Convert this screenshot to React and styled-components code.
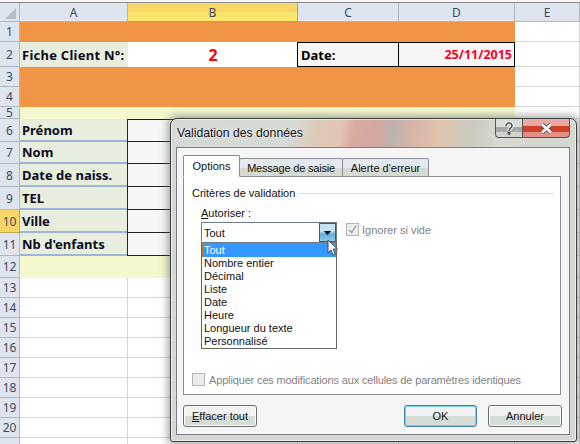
import React from 'react';
import styled, { createGlobalStyle } from 'styled-components';

const GlobalStyle = createGlobalStyle`
  html, body {
    margin: 0;
    padding: 0;
    background: #ffffff;
    overflow: hidden;
  }
`;

const Screen = styled.div`
  position: relative;
  width: 580px;
  height: 444px;
  overflow: hidden;
  background: #ffffff;
  font-family: "Noto Sans", "Liberation Sans", sans-serif;
`;

const Sheet = styled.div`
  display: grid;
  grid-template-columns: 20px 108px 170px 101px 116px 65px;
  grid-template-rows: 3px 19px 20px 25px 20px 20px 12px 23px 22px 23px 23px 23px 23px 22px repeat(9, 20px);
`;

const TopStrip = styled.div`
  grid-column: 1 / -1;
  background: linear-gradient(#f4f6f8 0 2px, #8d8d8d 2px);
`;

const Corner = styled.div`
  background: #dfe5ee;
  border-right: 1px solid #b0b7c0;
  border-bottom: 1px solid #b0b7c0;
  position: relative;
  &::after {
    content: "";
    position: absolute;
    right: 3px;
    bottom: 2px;
    border-left: 11px solid transparent;
    border-bottom: 11px solid #b8bdc3;
  }
`;

const ColHead = styled.div`
  display: flex;
  align-items: center;
  justify-content: center;
  font-size: 12px;
  color: #3d4a5c;
  background: ${(p) => (p.$active ? 'linear-gradient(#f9d669 0 9px, #f8e56a 9px)' : '#dfe5ee')};
  border-right: 1px solid ${(p) => (p.$active ? '#c2a04c' : '#b0b7c0')};
  border-bottom: 1px solid ${(p) => (p.$active ? '#c2a04c' : '#b0b7c0')};
`;

const RowHead = styled.div`
  display: flex;
  align-items: center;
  justify-content: center;
  font-size: 12px;
  color: #3d4a5c;
  background: ${(p) => (p.$active ? '#f8d666' : '#dfe5ee')};
  border-right: 1px solid ${(p) => (p.$active ? '#c2a04c' : '#b0b7c0')};
  border-bottom: 1px solid ${(p) => (p.$active ? '#c2a04c' : '#b0b7c0')};
`;

const Cell = styled.div`
  display: flex;
  align-items: center;
  min-width: 0;
  white-space: nowrap;
  overflow: hidden;
  box-sizing: border-box;
  grid-column: span ${(p) => p.$span || 1};
  background: ${(p) => p.$bg || '#ffffff'};
  border-right: 1px solid ${(p) => p.$line || '#d4d4d4'};
  border-bottom: 1px solid ${(p) => p.$line || '#d4d4d4'};
`;

const Fill = styled(Cell)`
  border: none;
`;

const LabelCell = styled(Cell)`
  padding-left: 2px;
  font-size: 13px;
  font-weight: 700;
  letter-spacing: ${(p) => p.$track || 0}px;
  color: #0a0a1e;
  background: #e7eedd;
  border-right: none;
  border-bottom: ${(p) => (p.$rule ? '2px solid #9db6d6' : 'none')};
`;

const NumberCell = styled(Cell)`
  justify-content: center;
  font-size: 16px;
  font-weight: 700;
  color: #ff0000;
  border: none;
`;

const BoxCell = styled(Cell)`
  background: #f6f6f6;
  font-size: ${(p) => (p.$end ? '12.5px' : '13px')};
  font-weight: 700;
  border-top: 1px solid #000000;
  border-right: 1px solid #000000;
  border-bottom: 1px solid #000000;
  border-left: ${(p) => (p.$first ? '1px solid #000000' : 'none')};
  margin-left: ${(p) => (p.$first ? '-1px' : '0')};
  color: ${(p) => p.$color || '#000000'};
  padding: 0 2px 0 3px;
  justify-content: ${(p) => (p.$end ? 'flex-end' : 'flex-start')};
`;

const InputCell = styled(Cell)`
  background: #f6f6f6;
  margin-left: ${(p) => (p.$first ? '-1px' : '0')};
  border-left: ${(p) => (p.$first ? '1px solid #222222' : 'none')};
  border-right: 1px solid #222222;
  border-bottom: 1px solid #222222;
  border-top: ${(p) => (p.$top ? '1px solid #222222' : 'none')};
`;

const Dialog = styled.div`
  position: absolute;
  left: 170px;
  top: 118px;
  width: 407px;
  height: 324px;
  box-sizing: border-box;
  display: flex;
  flex-direction: column;
  padding: 0 6px 6px 5px;
  border: 1px solid #3c4043;
  border-radius: 7px 7px 3px 3px;
  background:
    linear-gradient(100deg, #d5d9d4 0 30%, #dccab8 36%, #e2c5b2 42%, #d8ab9f 45%, #d2a7a2 51%, #bdb3ae 55%, #d6b3a6 59%, #e0c2ad 66%, #c9cac0 74%, #d5d9d0 80%, #d3d8d0 100%) top / 100% 29px no-repeat,
    #d3d9d2;
  box-shadow: 0 0 7px 3px rgba(95, 100, 95, 0.5), inset 0 0 0 1px rgba(255, 255, 255, 0.55);
  font-family: "Liberation Sans", "Noto Sans", sans-serif;
  font-size: 11px;
  color: #111111;
`;

const TitleBar = styled.div`
  height: 28px;
  flex: none;
  display: flex;
  align-items: center;
  justify-content: space-between;
  font-size: 12.2px;
  color: #1a1a1a;
`;

const TitleText = styled.span`
  padding-left: 1px;
  text-shadow: 0 0 6px rgba(255, 255, 255, 0.9);
`;

const Caption = styled.div`
  display: flex;
  align-self: flex-start;
`;

const CaptionButton = styled.div`
  width: ${(p) => (p.$close ? '47px' : '28px')};
  height: 19px;
  box-sizing: border-box;
  display: flex;
  align-items: center;
  justify-content: center;
  border: 1px solid #54585c;
  border-top: none;
  border-left: ${(p) => (p.$close ? 'none' : '1px solid #54585c')};
  border-radius: ${(p) => (p.$close ? '0 0 4px 0' : '0 0 0 4px')};
  background: ${(p) =>
    p.$close
      ? 'linear-gradient(#e8a99f 0 40%, #d2402c 40% 70%, #e09085 70%)'
      : 'linear-gradient(#d9ddd8 0 45%, #a8a9a8 45% 70%, #cfd2ce 70%)'};
`;

const Panel = styled.div`
  flex: 1;
  display: flex;
  flex-direction: column;
  background: #f5f5f5;
  border: 1px solid #7d7d85;
  padding: 7px 8px 7px 6px;
  min-height: 0;
`;

const TabRow = styled.div`
  display: flex;
  align-items: flex-end;
  height: 22px;
  flex: none;
  position: relative;
  z-index: 1;
  margin-bottom: -1px;
`;

const Tab = styled.div`
  box-sizing: border-box;
  height: ${(p) => (p.$active ? '22px' : '19px')};
  width: ${(p) => p.$w}px;
  margin-right: -1px;
  display: flex;
  align-items: center;
  justify-content: center;
  letter-spacing: ${(p) => p.$track || 0}px;
  border: 1px solid #8b8b95;
  border-bottom: ${(p) => (p.$active ? '1px solid #ffffff' : '1px solid #8b8b95')};
  background: ${(p) => (p.$active ? '#ffffff' : 'linear-gradient(#e3e9ef 0 50%, #d5dbd3 50%)')};
  border-radius: 2px 2px 0 0;
  z-index: ${(p) => (p.$active ? 2 : 1)};
`;

const TabBody = styled.div`
  flex: 1;
  background: #ffffff;
  border: 1px solid #8b8b95;
  display: flex;
  flex-direction: column;
  padding: 9px 6px 8px 8px;
  min-height: 0;
`;

const Legend = styled.div`
  display: flex;
  align-items: center;
  gap: 3px;
  height: 14px;
  flex: none;
  &::after {
    content: "";
    flex: 1;
    border-top: 1px solid #d8dcd6;
  }
`;

const FieldLabel = styled.div`
  margin: 6px 0 0 9px;
  height: 14px;
  line-height: 14px;
`;

const Under = styled.span`
  text-decoration: underline;
`;

const FieldRow = styled.div`
  display: flex;
  margin: 2px 0 0 9px;
  height: 21px;
`;

const ComboColumn = styled.div`
  position: relative;
  width: 136px;
`;

const Combo = styled.div`
  box-sizing: border-box;
  height: 21px;
  display: flex;
  align-items: center;
  justify-content: space-between;
  padding-left: 2px;
  border: 1px solid #6d7a87;
  background: #ffffff;
`;

const ComboButton = styled.div`
  width: 17px;
  height: 19px;
  box-sizing: border-box;
  display: flex;
  align-items: center;
  justify-content: center;
  border: 1px solid #2c6281;
  background: linear-gradient(#c5e2f3 0 40%, #62b0dc 60%, #8fcbe9);
`;

const DropList = styled.div`
  position: absolute;
  left: 0;
  right: 0;
  top: 21px;
  box-sizing: border-box;
  border: 1px solid #646464;
  border-top: none;
  background: #ffffff;
  z-index: 3;
`;

const DropItem = styled.div`
  height: ${(p) => (p.$selected ? 14 : 13)}px;
  line-height: ${(p) => (p.$selected ? 14 : 13)}px;
  padding-left: 2px;
  color: ${(p) => (p.$selected ? '#ffffff' : '#111111')};
  background: ${(p) => (p.$selected ? '#3399ff' : 'transparent')};
  outline: ${(p) => (p.$selected ? '1px dotted #c77a1c' : 'none')};
  outline-offset: -1px;
`;

const Pointer = styled.svg`
  position: absolute;
  left: 126px;
  top: 17px;
  z-index: 4;
`;

const CheckRow = styled.div`
  display: flex;
  align-items: center;
  flex: none;
  height: 13px;
  white-space: nowrap;
  gap: ${(p) => p.$gap || 4}px;
  letter-spacing: ${(p) => p.$track || 0}px;
  color: #7f7f7f;
  margin: ${(p) => p.$margin || '0'};
`;

const CheckBox = styled.div`
  box-sizing: border-box;
  width: 13px;
  height: 13px;
  flex: none;
  display: flex;
  align-items: center;
  justify-content: center;
  border: 1px solid #b5b5b5;
  background: #ececec;
`;

const Spacer = styled.div`
  flex: 1;
`;

const Footer = styled.div`
  display: flex;
  align-items: center;
  flex: none;
  height: 22px;
  margin: 10px -1px 0 0;
`;

const Button = styled.div`
  box-sizing: border-box;
  width: ${(p) => p.$w}px;
  height: 22px;
  margin-left: ${(p) => p.$gap || 0}px;
  display: flex;
  align-items: center;
  justify-content: center;
  border: 1px solid ${(p) => (p.$primary ? '#3c7fb1' : '#707070')};
  border-radius: 3px;
  background: linear-gradient(#f2f2f2 0 48%, #d5dbd5 48%);
  box-shadow: inset 0 0 0 1px ${(p) => (p.$primary ? '#7cd0f4' : '#fbfbfb')};
`;

const columns = ['A', 'B', 'C', 'D', 'E'];
const labels = ['Prénom', 'Nom', 'Date de naiss.', 'TEL', 'Ville', "Nb d'enfants"];
const options = ['Tout', 'Nombre entier', 'Décimal', 'Liste', 'Date', 'Heure', 'Longueur du texte', 'Personnalisé'];
const tabs = [
  { name: 'Options', w: 57, active: true },
  { name: 'Message de saisie', w: 104, track: -0.2 },
  { name: "Alerte d'erreur", w: 87 },
];

const CheckMark = ({ color }) => (
  <svg width="9" height="9" viewBox="0 0 9 9">
    <path d="M1 5l2.5 2.5L8 1" fill="none" stroke={color} strokeWidth="1.6" />
  </svg>
);

const App = () => {
  const emptyRows = [13, 14, 15, 16, 17, 18, 19, 20];
  return (
    <Screen>
      <GlobalStyle />
      <Sheet>
        <TopStrip />
        <Corner />
        {columns.map((c) => (
          <ColHead key={c} $active={c === 'B'}>{c}</ColHead>
        ))}

        <RowHead>1</RowHead>
        <Fill $span={4} $bg="#ef9545" />
        <Cell />

        <RowHead>2</RowHead>
        <LabelCell $track={0.25}>Fiche Client N°:</LabelCell>
        <NumberCell>2</NumberCell>
        <BoxCell $first>Date:</BoxCell>
        <BoxCell $end $color="#ff0022">25/11/2015</BoxCell>
        <Cell />

        <RowHead>3</RowHead>
        <Fill $span={4} $bg="#ef9545" />
        <Cell />
        <RowHead>4</RowHead>
        <Fill $span={4} $bg="#ef9545" />
        <Cell />

        <RowHead>5</RowHead>
        <Fill $span={4} $bg="#f5f8cf" />
        <Cell />

        {labels.map((label, i) => (
          <React.Fragment key={label}>
            <RowHead $active={i === 4}>{i + 6}</RowHead>
            <LabelCell $rule>{label}</LabelCell>
            <InputCell $first $top={i === 0} />
            <InputCell $top={i === 0} />
            <InputCell $top={i === 0} />
            <Cell />
          </React.Fragment>
        ))}

        <RowHead>12</RowHead>
        <Fill $span={4} $bg="#f5f8cf" />
        <Cell />

        {emptyRows.map((n) => (
          <React.Fragment key={n}>
            <RowHead>{n}</RowHead>
            <Cell />
            <Cell />
            <Cell />
            <Cell />
            <Cell />
          </React.Fragment>
        ))}
        <RowHead />
        <Cell />
        <Cell />
        <Cell />
        <Cell />
        <Cell />
      </Sheet>

      <Dialog>
        <TitleBar>
          <TitleText>Validation des données</TitleText>
          <Caption>
            <CaptionButton>
              <svg width="10" height="13" viewBox="0 0 10 13">
                <path d="M2 4c0-4 6-4 6 0 0 2-3 2-3 5" fill="none" stroke="#ffffff" strokeWidth="3.4" />
                <path d="M2 4c0-4 6-4 6 0 0 2-3 2-3 5" fill="none" stroke="#555555" strokeWidth="1.6" />
                <rect x="3.6" y="10" width="2.8" height="2.8" fill="#555555" />
              </svg>
            </CaptionButton>
            <CaptionButton $close>
              <svg width="13" height="11" viewBox="0 0 13 11">
                <path d="M2 1.5l9 8M11 1.5l-9 8" stroke="#5a5a5a" strokeWidth="4.4" />
                <path d="M2 1.5l9 8M11 1.5l-9 8" stroke="#f4f4f4" strokeWidth="2.6" />
              </svg>
            </CaptionButton>
          </Caption>
        </TitleBar>

        <Panel>
          <TabRow>
            {tabs.map((t) => (
              <Tab key={t.name} $w={t.w} $active={t.active} $track={t.track}>{t.name}</Tab>
            ))}
          </TabRow>
          <TabBody>
            <Legend>Critères de validation</Legend>
            <FieldLabel><Under>A</Under>utoriser :</FieldLabel>
            <FieldRow>
              <ComboColumn>
                <Combo>
                  Tout
                  <ComboButton>
                    <svg width="7" height="4" viewBox="0 0 7 4">
                      <path d="M0 0h7L3.5 4z" fill="#000000" />
                    </svg>
                  </ComboButton>
                </Combo>
                <DropList>
                  {options.map((o, i) => (
                    <DropItem key={o} $selected={i === 0}>{o}</DropItem>
                  ))}
                </DropList>
                <Pointer width="12" height="17" viewBox="0 0 12 17">
                  <path d="M1 1v13l3-3 2 5 2.2-1-2-5h4.3z" fill="#ffffff" stroke="#3a4a58" strokeWidth="1" />
                </Pointer>
              </ComboColumn>
              <CheckRow $margin="1px 0 0 9px" $gap={3}>
                <CheckBox><CheckMark color="#a8a8a8" /></CheckBox>
                Ignorer si vide
              </CheckRow>
            </FieldRow>
            <Spacer />
            <CheckRow $track={-0.15}>
              <CheckBox />
              Appliquer ces modifications aux cellules de paramètres identiques
            </CheckRow>
          </TabBody>
          <Footer>
            <Button $w={74}><span><Under>E</Under>ffacer tout</span></Button>
            <Spacer />
            <Button $w={73} $primary>OK</Button>
            <Button $w={74} $gap={11}>Annuler</Button>
          </Footer>
        </Panel>
      </Dialog>
    </Screen>
  );
};

export default App;
